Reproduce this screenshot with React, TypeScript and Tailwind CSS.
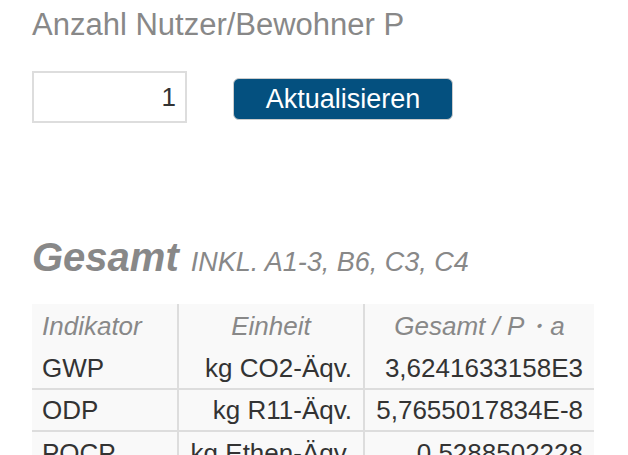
import React from "react";

const rows = [
  { name: "GWP", unit: "kg CO2-Äqv.", value: "3,6241633158E3" },
  { name: "ODP", unit: "kg R11-Äqv.", value: "5,7655017834E-8" },
  { name: "POCP", unit: "kg Ethen-Äqv.", value: "0,5288502228" },
];

function App() {
  return (
    <div className="w-[628px] h-[455px] overflow-hidden bg-white px-[32px] font-['Liberation_Sans',Arial,sans-serif]">
      <h1 className="pt-[7px] text-[31px] leading-[36px] text-[#888]">
        Anzahl Nutzer/Bewohner P
      </h1>

      <div className="mt-[28px] flex items-start">
        <input
          className="w-[155px] h-[52px] border-2 border-[#ddd] bg-white pr-[9px] text-right text-[26px] text-[#333] outline-none"
          defaultValue="1"
        />
        <button className="ml-[46px] mt-[7px] w-[220px] h-[42px] rounded-[6px] border border-[#ccc] bg-[#04507f] text-[27px] leading-none text-white">
          Aktualisieren
        </button>
      </div>

      <h2 className="mt-[111px] leading-[46px] text-[#888]">
        <span className="text-[40px] font-bold italic">Gesamt</span>
        <span className="ml-[12px] text-[27px] italic">INKL. A1-3, B6, C3, C4</span>
      </h2>

      <table className="mt-[15px] w-[562px] table-fixed border-collapse bg-[#f9f9f9] text-[26px] leading-[40px] text-[#333]">
        <colgroup>
          <col className="w-[146px]" />
          <col className="w-[186px]" />
          <col />
        </colgroup>
        <thead>
          <tr className="h-[43px] italic text-[#888]">
            <th className="pl-[10px] text-left font-normal">Indikator</th>
            <th className="border-l-2 border-[#ddd] text-center font-normal">Einheit</th>
            <th className="border-l-2 border-[#ddd] text-center font-normal">
              Gesamt / P・a
            </th>
          </tr>
        </thead>
        <tbody>
          {rows.map((r, i) => (
            <tr key={r.name} className={i > 0 ? "h-[42px] border-t-2 border-[#ddd]" : "h-[42px]"}>
              <td className="pl-[10px] text-left">{r.name}</td>
              <td className="border-l-2 border-[#ddd] pr-[11px] text-right">{r.unit}</td>
              <td className="border-l-2 border-[#ddd] pr-[11px] text-right">{r.value}</td>
            </tr>
          ))}
        </tbody>
      </table>
    </div>
  );
}

export default App;
